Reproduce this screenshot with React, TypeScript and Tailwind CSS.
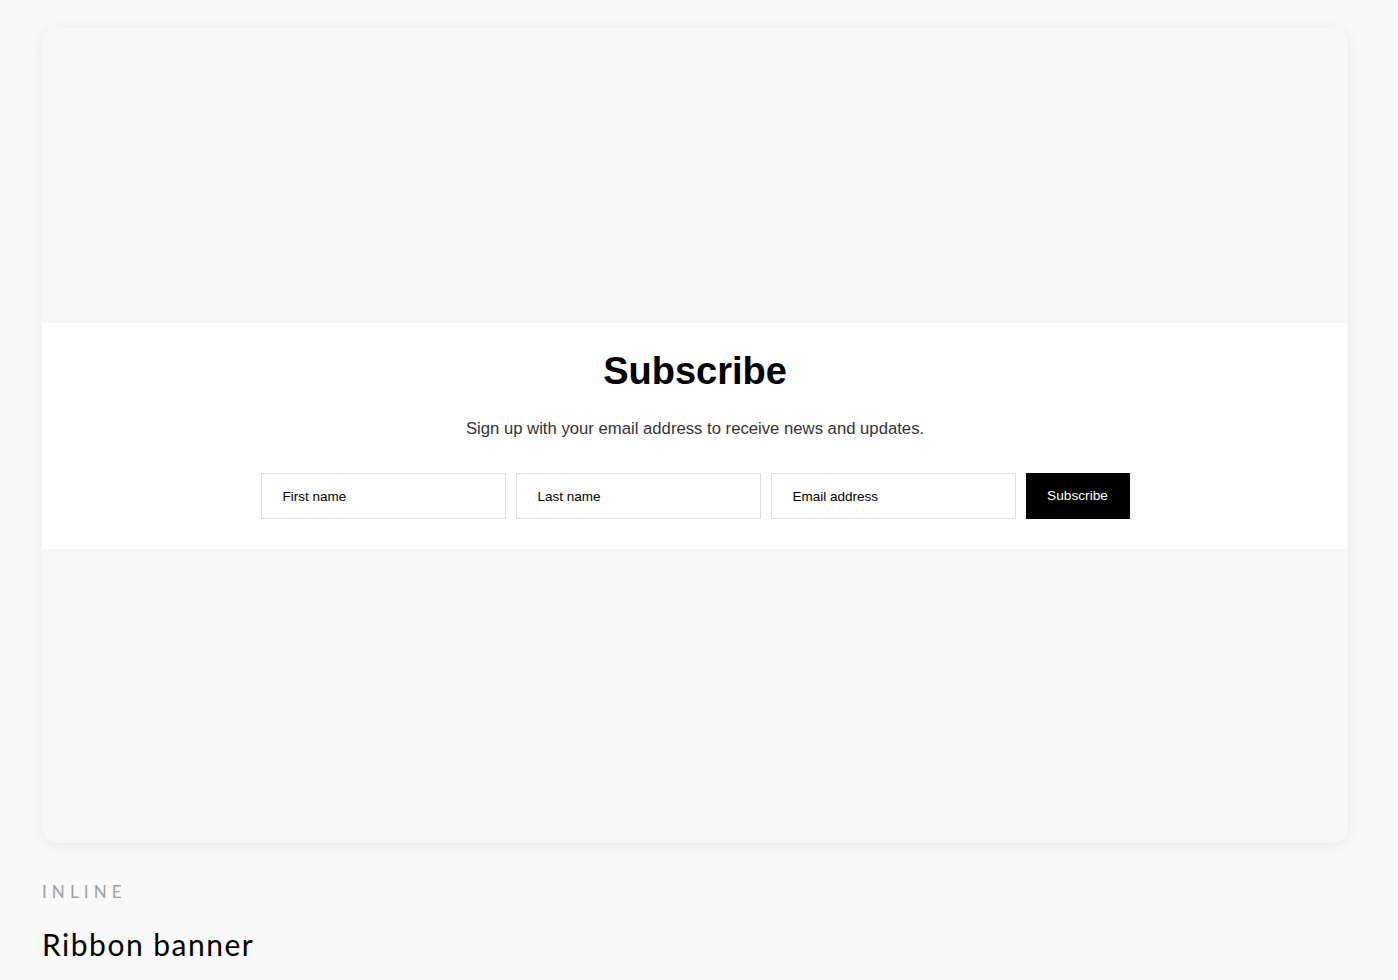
export default function App() {
  const fields = ['First name', 'Last name', 'Email address'];

  return (
    <div className="min-h-screen bg-[#f9f9f9] pl-[42px] pr-[50px] pt-[28px] pb-10">
      <div className="h-[815px] rounded-[16px] bg-[#f7f7f7] shadow-[0_2px_14px_rgba(0,0,0,0.07)] flex flex-col justify-center overflow-hidden">
        <div className="bg-white pt-[25px] pb-[30px] flex flex-col items-center font-['Liberation_Sans',Arial,sans-serif]">
          <h2 className="text-[38px] leading-[46px] font-bold text-black">Subscribe</h2>
          <p className="mt-[23px] text-[16.7px] leading-[24px] text-[#333] font-light">
            Sign up with your email address to receive news and updates.
          </p>
          <form className="mt-[32px] flex gap-[10px]" onSubmit={(e) => e.preventDefault()}>
            {fields.map((f) => (
              <input
                key={f}
                placeholder={f}
                className="w-[245px] h-[46px] border border-[#ddd] bg-white px-[21px] pt-[2px] text-[13.5px] text-black placeholder:text-black outline-none"
              />
            ))}
            <button className="w-[104px] h-[46px] pt-[2px] bg-black text-white text-[13.7px]">Subscribe</button>
          </form>
        </div>
      </div>

      <div className="mt-[37px] font-['Lato',sans-serif]">
        <div className="text-[17px] leading-[24px] tracking-[0.3em] text-[#a0a0a0]">INLINE</div>
        <div className="mt-[22px] text-[30px] leading-[36px] tracking-[1.5px] text-black">Ribbon banner</div>
      </div>
    </div>
  );
}
